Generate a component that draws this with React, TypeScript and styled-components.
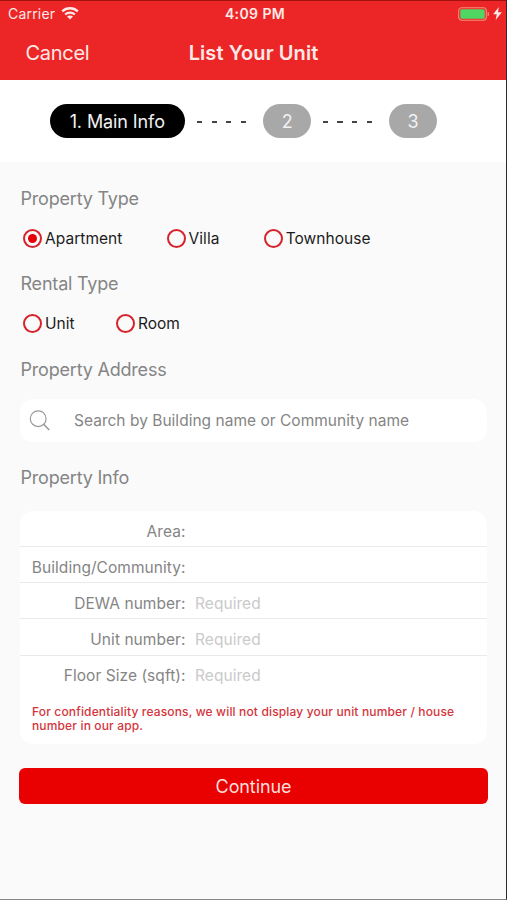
import React from "react";
import styled, { createGlobalStyle } from "styled-components";

const GlobalStyle = createGlobalStyle`
  * { box-sizing: border-box; }
  body { margin: 0; background: #fafafa; font-family: Inter, "Liberation Sans", sans-serif; }
  button, input { font: inherit; letter-spacing: inherit; }
`;

const Screen = styled.div`
  width: 507px;
  height: 900px;
  overflow: hidden;
  background: #fafafa;
  border-right: 1.5px solid #2b2b2b;
  border-bottom: 1px solid #858585;
`;

const Header = styled.header`
  height: 79.5px;
  margin-right: -1px;
  background: #ec2626;
  border-top: 1.5px solid #a31010;
  border-right: 1px solid #a82020;
  color: #ffe9e7;
`;

const StatusBar = styled.div`
  display: grid;
  grid-template-columns: 1fr auto 1fr;
  align-items: center;
  height: 26px;
  padding: 0 4px 1px 8px;
  font-size: 14px;
`;

const Carrier = styled.div`
  display: flex;
  align-items: center;
  gap: 6px;
  letter-spacing: 0.2px;
`;

const Clock = styled.div`
  font-weight: 600;
  font-size: 14px;
  letter-spacing: 0.4px;
`;

const Battery = styled.div`
  display: flex;
  align-items: center;
  justify-content: flex-end;
  gap: 3px;
`;

const NavBar = styled.nav`
  display: grid;
  grid-template-columns: 1fr auto 1fr;
  align-items: center;
  height: 51px;
  padding: 0 24.5px 0 25.5px;
`;

const CancelButton = styled.button`
  justify-self: start;
  padding: 0;
  border: 0;
  background: none;
  color: inherit;
  font-size: 20px;
  letter-spacing: -0.3px;
`;

const Title = styled.h1`
  margin: 0;
  font-size: 20px;
  font-weight: 600;
  letter-spacing: 0.08px;
`;

const Steps = styled.div`
  display: flex;
  align-items: center;
  height: 82.5px;
  padding: 0 0 0 49.5px;
  background: #fff;
`;

const Step = styled.div<{ $active?: boolean }>`
  display: flex;
  align-items: center;
  justify-content: center;
  width: ${(p) => (p.$active ? 135.5 : 47.5)}px;
  height: 34.5px;
  padding-top: 1.2px;
  border-radius: 18px;
  background: ${(p) => (p.$active ? "#000" : "#a8a8a8")};
  color: #f1f1f1;
  font-size: 18px;
  letter-spacing: -0.1px;
`;

const Connector = styled.div`
  display: flex;
  justify-content: center;
  gap: 9.5px;
  width: 78.4px;
  padding: 2px 5.5px 0 0;
`;

const Dash = styled.span`
  width: 5.2px;
  height: 2px;
  background: #444;
`;

const Form = styled.main`
  padding: 15px 18px 0 20px;
`;

const SectionTitle = styled.h2`
  margin: 0 0 0 0.5px;
  height: 43px;
  line-height: 43px;
  color: #858585;
  font-size: 18px;
  font-weight: 400;
  letter-spacing: -0.2px;
`;

const RadioGroup = styled.div<{ $gap: number }>`
  display: flex;
  align-items: center;
  gap: ${(p) => p.$gap}px;
  height: 42.2px;
  padding: 0 0 6px 3px;

  & + h2 + & {
    height: 43px;
  }
`;

const RadioOption = styled.label`
  display: flex;
  align-items: center;
  gap: 3px;
  color: #1c1c1c;
  font-size: 15.5px;
  letter-spacing: 0.04px;
`;

const RadioCircle = styled.span<{ $checked?: boolean }>`
  display: flex;
  align-items: center;
  justify-content: center;
  width: 19px;
  height: 19px;
  border: 2px solid #d6232b;
  border-radius: 50%;

  &::after {
    content: "";
    width: 9px;
    height: 9px;
    border-radius: 50%;
    background: ${(p) => (p.$checked ? "#e60008" : "transparent")};
  }
`;

const SearchBox = styled.div`
  display: flex;
  align-items: center;
  gap: 24px;
  height: 43px;
  margin: 7.8px 1px 13.8px 0;
  padding-left: 9px;
  border-radius: 13px;
  background: #fff;
  color: #858585;
  font-size: 15.5px;
  letter-spacing: 0.02px;
`;

const InfoCard = styled.section`
  height: 233px;
  margin: 12px 1px 0 0;
  border-radius: 13px;
  background: #fff;
`;

const InfoRow = styled.div<{ $last?: boolean }>`
  display: grid;
  grid-template-columns: 165.5px 1fr;
  align-items: center;
  gap: 9.5px;
  height: 36.2px;
  padding-top: ${(p) => (p.$last ? 4 : 5.5)}px;
  border-bottom: ${(p) => (p.$last ? "0" : "1.5px solid #e9e9e9")};
  font-size: 15.5px;
  letter-spacing: 0.05px;
`;

const InfoLabel = styled.span`
  color: #858585;
  text-align: right;
`;

const Placeholder = styled.span`
  color: #cacaca;
`;

const Notice = styled.p`
  margin: 13px 12px 0;
  color: #d4343c;
  font-size: 12px;
  font-weight: 500;
  line-height: 14.2px;
  letter-spacing: 0.15px;
`;

const ContinueButton = styled.button`
  display: block;
  width: 469px;
  height: 36.5px;
  margin: 24px 0 0 -1px;
  padding: 1px 0 0;
  border: 0;
  border-radius: 6px;
  background: #e90000;
  color: #ffdfdc;
  font-size: 18px;
  letter-spacing: -0.1px;
`;

const WifiIcon = () => (
  <svg width="18" height="13" viewBox="0 0 18 13" fill="none" stroke="currentColor">
    <path d="M1.2 4.4C5.6.2 12.4.2 16.8 4.4" strokeWidth="2.3" />
    <path d="M4.1 7.5c2.8-2.6 7-2.6 9.8 0" strokeWidth="2.2" />
    <path d="M9 12.5 6 9.6c1.7-1.5 4.3-1.5 6 0Z" fill="currentColor" stroke="none" />
  </svg>
);

const BatteryIcon = () => (
  <svg width="32" height="14" viewBox="0 0 32 14">
    <rect x=".7" y=".7" width="27.6" height="12.6" rx="3" fill="none" stroke="#f58f7c" strokeWidth="1.1" />
    <rect x="2.3" y="2.3" width="24.4" height="9.4" rx="1.5" fill="#50d663" />
    <path d="M29.6 4.5c2 1 2 4 0 5Z" fill="#f58f7c" />
  </svg>
);

const BoltIcon = () => (
  <svg width="9" height="13" viewBox="0 0 8 12" fill="currentColor">
    <path d="M5.2 0 0 6.8h3.3L2.3 12 8 4.8H4.5Z" />
  </svg>
);

const SearchIcon = () => (
  <svg width="21" height="21" viewBox="0 0 21 21" fill="none" stroke="#999" strokeWidth="1.2">
    <circle cx="9.2" cy="8.7" r="7.9" />
    <path d="m14.5 14 5.7 6" strokeWidth="1.6" />
  </svg>
);

const Dashes = () => (
  <Connector>
    {[0, 1, 2, 3].map((i) => (
      <Dash key={i} />
    ))}
  </Connector>
);

const Radio = ({ label, checked }: { label: string; checked?: boolean }) => (
  <RadioOption>
    <RadioCircle $checked={checked} />
    {label}
  </RadioOption>
);

const fields = [
  { label: "Area:" },
  { label: "Building/Community:" },
  { label: "DEWA number:", placeholder: "Required" },
  { label: "Unit number:", placeholder: "Required" },
  { label: "Floor Size (sqft):", placeholder: "Required" },
];

export default function App() {
  return (
    <Screen>
      <GlobalStyle />
      <Header>
        <StatusBar>
          <Carrier>
            Carrier
            <WifiIcon />
          </Carrier>
          <Clock>4:09 PM</Clock>
          <Battery>
            <BatteryIcon />
            <BoltIcon />
          </Battery>
        </StatusBar>
        <NavBar>
          <CancelButton>Cancel</CancelButton>
          <Title>List Your Unit</Title>
        </NavBar>
      </Header>
      <Steps>
        <Step $active>1. Main Info</Step>
        <Dashes />
        <Step>2</Step>
        <Dashes />
        <Step>3</Step>
      </Steps>
      <Form>
        <SectionTitle>Property Type</SectionTitle>
        <RadioGroup $gap={44.2}>
          <Radio label="Apartment" checked />
          <Radio label="Villa" />
          <Radio label="Townhouse" />
        </RadioGroup>
        <SectionTitle>Rental Type</SectionTitle>
        <RadioGroup $gap={41.2}>
          <Radio label="Unit" />
          <Radio label="Room" />
        </RadioGroup>
        <SectionTitle>Property Address</SectionTitle>
        <SearchBox>
          <SearchIcon />
          Search by Building name or Community name
        </SearchBox>
        <SectionTitle>Property Info</SectionTitle>
        <InfoCard>
          {fields.map((field, i) => (
            <InfoRow key={field.label} $last={i === fields.length - 1}>
              <InfoLabel>{field.label}</InfoLabel>
              {field.placeholder && <Placeholder>{field.placeholder}</Placeholder>}
            </InfoRow>
          ))}
          <Notice>
            For confidentiality reasons, we will not display your unit number / house
            <br />
            number in our app.
          </Notice>
        </InfoCard>
        <ContinueButton>Continue</ContinueButton>
      </Form>
    </Screen>
  );
}
